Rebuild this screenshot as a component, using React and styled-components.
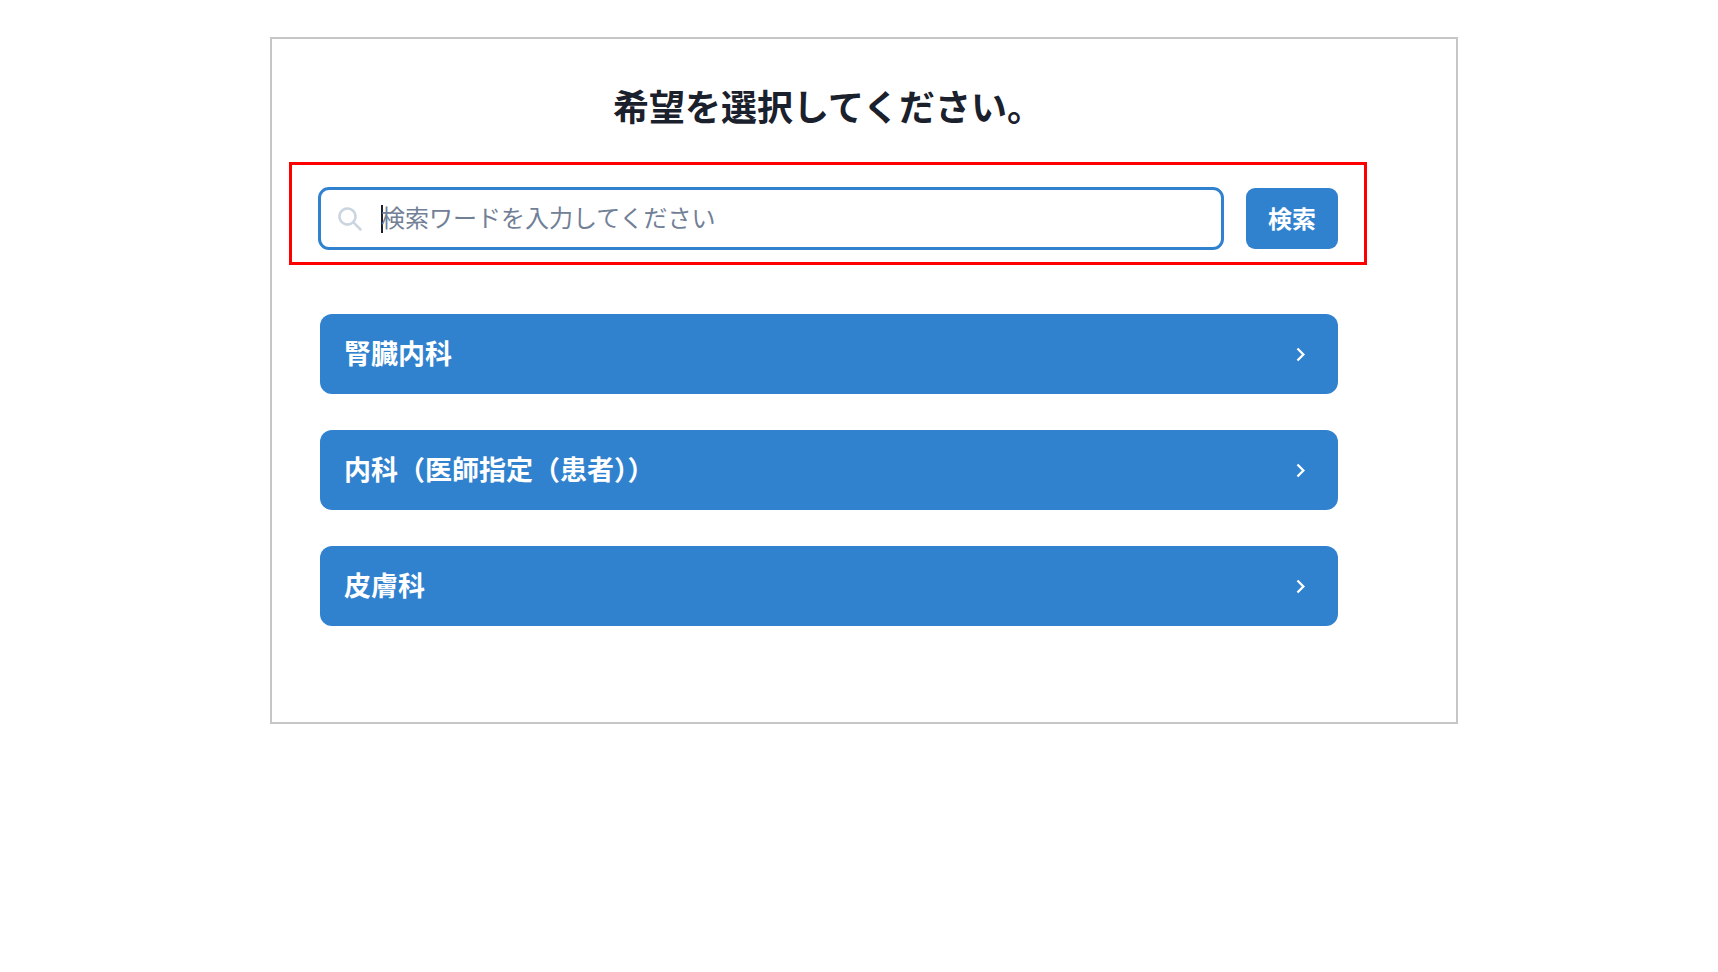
import React, { useState } from 'react';
import styled, { createGlobalStyle } from 'styled-components';

const GlobalStyle = createGlobalStyle`
    *, *::before, *::after {
        box-sizing: border-box;
    }
    body {
        margin: 0;
        background: #ffffff;
        color: #1a202c;
        font-family: 'Noto Sans CJK JP', sans-serif;
    }
`

const Panel = styled.main`
    margin: 37px 260px 37px 270px;
    padding: 39px 89px 96px 17px;
    border: 2px solid #c6c6c6;
`

const Title = styled.h1`
    margin: 0 0 29px;
    font-size: 36px;
    font-weight: 700;
    line-height: 55px;
    text-align: center;
`

const SearchForm = styled.form`
    display: flex;
    align-items: center;
    gap: 22px;
    padding: 22px 26px 12px;
    border: 3px solid #ff0000;
`

const Field = styled.label`
    display: flex;
    flex: 1;
    align-items: center;
    height: 63px;
    padding: 0 17px;
    border: 3px solid #3182ce;
    border-radius: 11px;
    cursor: text;
`

const Caret = styled.span`
    width: 2px;
    height: 28px;
    margin: 0 -2px 0 19px;
    background: #1a202c;
`

const SearchInput = styled.input`
    flex: 1;
    min-width: 0;
    padding: 0 0 3px;
    border: 0;
    outline: 0;
    background: transparent;
    color: inherit;
    font-family: inherit;
    font-size: 24px;
    line-height: 36px;

    &::placeholder {
        color: #718096;
        font-weight: 400;
        opacity: 1;
    }
`

const SearchButton = styled.button`
    height: 61px;
    padding: 0 22px 3px;
    border: 0;
    border-radius: 9px;
    background: #3182ce;
    color: #ffffff;
    font-family: inherit;
    font-size: 24px;
    font-weight: 700;
    cursor: pointer;
`

const List = styled.ul`
    display: flex;
    flex-direction: column;
    gap: 36px;
    margin: 49px 29px 0 31px;
    padding: 0;
    list-style: none;
`

const DepartmentButton = styled.button`
    display: flex;
    align-items: center;
    justify-content: space-between;
    width: 100%;
    height: 80px;
    padding: 0 24px;
    border: 0;
    border-radius: 12px;
    background: #3182ce;
    color: #ffffff;
    font-family: inherit;
    font-size: 27px;
    font-weight: 700;
    cursor: pointer;
`

const DepartmentName = styled.span`
    padding-bottom: 3px;
`

const SearchIcon = () => (
    <svg width="24" height="24" viewBox="0 0 24 24" fill="#cbd5e0" aria-hidden="true">
        <path d="M23.384,21.619,16.855,15.09a9.284,9.284,0,1,0-1.768,1.768l6.529,6.529a1.266,1.266,0,0,0,1.768,0A1.251,1.251,0,0,0,23.384,21.619ZM2.75,9.5a6.75,6.75,0,1,1,6.75,6.75A6.758,6.758,0,0,1,2.75,9.5Z" />
    </svg>
)

const ChevronIcon = () => (
    <svg width="27" height="27" viewBox="0 0 24 24" fill="currentColor" aria-hidden="true">
        <path d="M10 6L8.59 7.41 13.17 12l-4.58 4.59L10 18l6-6z" />
    </svg>
)

const departments = ['腎臓内科', '内科（医師指定（患者））', '皮膚科'];

const App = () => {
    const [word, setWord] = useState('');

    const search = (event) => {
        event.preventDefault();
    }

    return (
        <>
            <GlobalStyle />
            <Panel>
                <Title>希望を選択してください。</Title>
                <SearchForm onSubmit={search}>
                    <Field htmlFor="word">
                        <SearchIcon />
                        <Caret />
                        <SearchInput
                            id="word"
                            type="text"
                            placeholder="検索ワードを入力してください"
                            value={word}
                            onChange={(event) => setWord(event.target.value)}
                        />
                    </Field>
                    <SearchButton type="submit">検索</SearchButton>
                </SearchForm>
                <List>
                    {departments.map((name) => (
                        <li key={name}>
                            <DepartmentButton type="button">
                                <DepartmentName>{name}</DepartmentName>
                                <ChevronIcon />
                            </DepartmentButton>
                        </li>
                    ))}
                </List>
            </Panel>
        </>
    );
};

export default App;
